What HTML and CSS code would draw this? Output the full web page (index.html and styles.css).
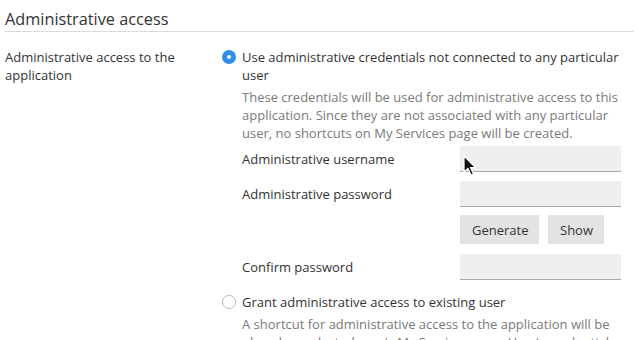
FILE: index.html
```html
<!DOCTYPE html>
<html lang="en">
<head>
    <meta charset="UTF-8">
    <meta name="viewport" content="width=device-width, initial-scale=1.0">
    <title>Administrative access</title>
    <link rel="stylesheet" href="styles.css">
</head>
<body>

<div class="page">
    <h2 class="section-title">Administrative access</h2>

    <div class="setting">
        <div class="setting-label">Administrative access to the application</div>

        <div class="setting-options">
            <div class="option">
                <span class="radio checked"></span>
                <div class="option-body">
                    <div class="option-title">Use administrative credentials not connected to any particular user</div>
                    <div class="option-desc">These credentials will be used for administrative access to this application. Since they are not associated with any particular user, no shortcuts on My Services page will be created.</div>

                    <div class="field">
                        <label>Administrative username</label>
                        <div class="field-input">
                            <input type="text">
                            <svg class="cursor" width="14" height="22" viewBox="0 0 14 22">
                                <path d="M1 1 L1 17 L5 13.5 L8 20 L10.5 19 L7.5 12.5 L12.5 12.5 Z" fill="#111" stroke="#fff" stroke-width="1.2" stroke-linejoin="round"/>
                            </svg>
                        </div>
                    </div>
                    <div class="field">
                        <label>Administrative password</label>
                        <div class="field-input">
                            <input type="password">
                        </div>
                    </div>
                    <div class="field">
                        <label></label>
                        <div class="buttons">
                            <button type="button">Generate</button>
                            <button type="button">Show</button>
                        </div>
                    </div>
                    <div class="field">
                        <label>Confirm password</label>
                        <div class="field-input">
                            <input type="password">
                        </div>
                    </div>
                </div>
            </div>

            <div class="option second">
                <span class="radio"></span>
                <div class="option-body">
                    <div class="option-title">Grant administrative access to existing user</div>
                    <div class="option-desc">A shortcut for administrative access to the application will be placed on selected user's My Services page. User's credentials will be used for access.</div>
                </div>
            </div>
        </div>
    </div>
</div>

</body>
</html>
```

FILE: styles.css
```css
html, body {
    margin: 0;
    height: 340px;
    overflow: hidden;
}
body {
    font-family: "Open Sans", sans-serif;
    font-size: 13px;
    line-height: 18px;
    color: #333;
    background: white;
}
.page {
    padding: 8px 5px 0 5px;
}
.section-title {
    margin: 0;
    font-size: 16.3px;
    font-weight: normal;
    line-height: 22px;
    padding-bottom: 1px;
    border-bottom: 1px solid #dcdcdc;
}
.setting {
    display: flex;
    margin-top: 16px;
}
.setting-label {
    width: 217px;
    padding-right: 20px;
    box-sizing: border-box;
}
.setting-options {
    flex: 1;
}
.option {
    display: flex;
}
.option.second {
    margin-top: 13px;
}
.radio {
    width: 14px;
    height: 14px;
    box-sizing: border-box;
    border-radius: 50%;
    border: 1px solid #b8b8b8;
    background: white;
    margin-top: 2px;
    margin-right: 6px;
    flex-shrink: 0;
    position: relative;
}
.radio.checked {
    border: none;
    background: #2f8ce9;
}
.radio.checked::after {
    content: "";
    position: absolute;
    left: 5px;
    top: 5px;
    width: 4px;
    height: 4px;
    border-radius: 50%;
    background: white;
}
.option-body {
    flex: 1;
}
.option-desc {
    color: #7a7a7a;
    margin-top: 4px;
}
.field {
    display: flex;
    align-items: center;
    margin-top: 9px;
}
.option-desc + .field {
    margin-top: 4px;
}
.field label {
    width: 218px;
    flex-shrink: 0;
}
.field-input {
    position: relative;
}
input {
    display: block;
    width: 161px;
    height: 26px;
    box-sizing: border-box;
    margin: 0;
    padding: 0 6px;
    border: none;
    border-bottom: 1px solid #a9a9a9;
    background: #efeef0;
    font-family: inherit;
    font-size: 13px;
}
.buttons {
    display: flex;
    gap: 9px;
    margin-top: -1px;
    margin-bottom: 1px;
}
button {
    height: 29px;
    padding: 0 12px;
    border: none;
    background: #e3e3e3;
    color: #333;
    font-family: inherit;
    font-size: 13px;
    cursor: pointer;
}
button:first-child {
    width: 79px;
}
button:last-child {
    width: 56px;
}
.cursor {
    position: absolute;
    left: 3px;
    top: 9px;
}
```
